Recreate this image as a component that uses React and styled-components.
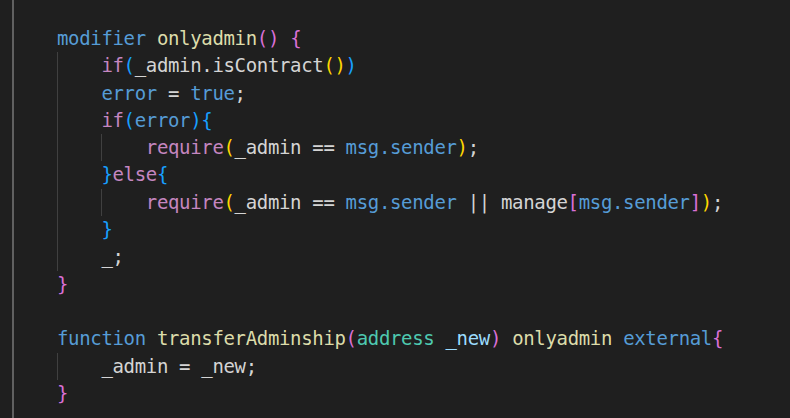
import React from 'react';
import styled, { createGlobalStyle } from 'styled-components';

const GlobalStyle = createGlobalStyle`
  html, body {
    margin: 0;
    padding: 0;
    background: #1f1f1f;
  }
`;

const colors = {
  kw: '#569cd6',
  fn: '#dcdcaa',
  ctrl: '#c586c0',
  txt: '#d4d4d4',
  type: '#4ec9b0',
  param: '#9cdcfe',
  gold: '#ffd700',
  orchid: '#da70d6',
  blue: '#179fff',
};

// each line: indent guides (true = guide drawn), then tokens
const lines = [
  { guides: [], tokens: [['kw', 'modifier'], ['txt', ' '], ['fn', 'onlyadmin'], ['orchid', '()'], ['txt', ' '], ['orchid', '{']] },
  { guides: [true], tokens: [['ctrl', 'if'], ['blue', '('], ['txt', '_admin.isContract'], ['gold', '()'], ['blue', ')']] },
  { guides: [true], tokens: [['kw', 'error'], ['txt', ' = '], ['kw', 'true'], ['txt', ';']] },
  { guides: [true], tokens: [['ctrl', 'if'], ['blue', '('], ['kw', 'error'], ['blue', '){']] },
  { guides: [true, true], tokens: [['ctrl', 'require'], ['gold', '('], ['txt', '_admin == '], ['kw', 'msg.sender'], ['gold', ')'], ['txt', ';']] },
  { guides: [true], tokens: [['blue', '}'], ['ctrl', 'else'], ['blue', '{']] },
  { guides: [true, true], tokens: [['ctrl', 'require'], ['gold', '('], ['txt', '_admin == '], ['kw', 'msg.sender'], ['txt', ' || manage'], ['orchid', '['], ['kw', 'msg.sender'], ['orchid', ']'], ['gold', ')'], ['txt', ';']] },
  { guides: [true], tokens: [['blue', '}']] },
  { guides: [true], tokens: [['txt', '_;']] },
  { guides: [], tokens: [['orchid', '}']] },
  { guides: [], tokens: [] },
  { guides: [], tokens: [['kw', 'function'], ['txt', ' '], ['fn', 'transferAdminship'], ['orchid', '('], ['type', 'address'], ['txt', ' '], ['param', '_new'], ['orchid', ')'], ['txt', ' '], ['fn', 'onlyadmin'], ['txt', ' '], ['kw', 'external'], ['orchid', '{']] },
  { guides: [true], tokens: [['txt', '_admin = _new;']] },
  { guides: [], tokens: [['orchid', '}']] },
];

export default function App() {
  return (
    <>
      <GlobalStyle />
      <Editor>
        <Code>
          {lines.map((line, i) => (
            <Line key={i}>
              {line.guides.map((g, j) => (
                <Indent key={j} $guide={g} />
              ))}
              {line.tokens.map(([kind, text], k) => (
                <Token key={k} $color={colors[kind]}>
                  {text}
                </Token>
              ))}
            </Line>
          ))}
        </Code>
      </Editor>
    </>
  );
}

const Editor = styled.div`
  display: flex;
  height: 418px;
  padding-left: 12px;
  background: #1f1f1f;
  overflow: hidden;
`;

const Code = styled.div`
  flex: 1;
  display: flex;
  flex-direction: column;
  padding: 25px 0 0 43px;
  border-left: 2px solid #606060;
  font-family: 'DejaVu Sans Mono', monospace;
  font-size: 19px;
  letter-spacing: -0.34px;
  color: #d4d4d4;
`;

const Line = styled.div`
  display: flex;
  height: 27.3px;
  line-height: 27.3px;
  white-space: pre;
`;

const Indent = styled.span`
  flex: none;
  width: 44.4px;
  border-left: 1px solid ${(p) => (p.$guide ? '#404040' : 'transparent')};
  box-sizing: border-box;
`;

const Token = styled.span`
  color: ${(p) => p.$color};
`;
